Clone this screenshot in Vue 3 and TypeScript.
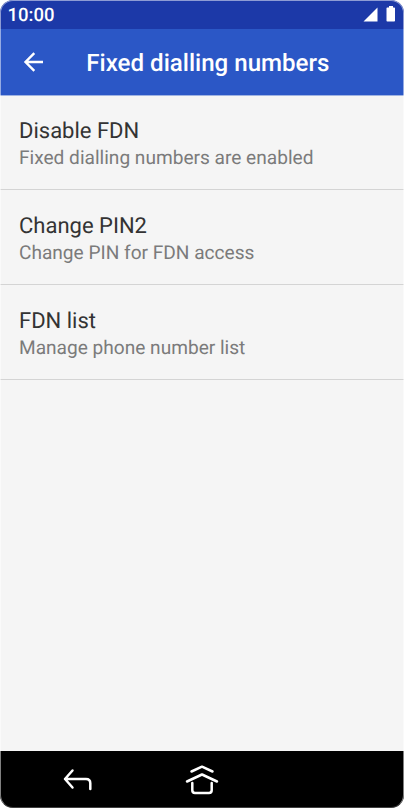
<script setup lang="ts">
interface Setting {
  title: string
  summary: string
}

const settings: Setting[] = [
  { title: 'Disable FDN', summary: 'Fixed dialling numbers are enabled' },
  { title: 'Change PIN2', summary: 'Change PIN for FDN access' },
  { title: 'FDN list', summary: 'Manage phone number list' },
]
</script>

<template>
  <div class="phone">
    <header class="status">
      <span class="time">10:00</span>
      <svg class="indicators" width="34" height="18" viewBox="0 0 34 18" fill="#fff">
        <path d="M14.500 2.500V16.500H.5z" />
        <path d="M26 1h4v1.500h1.200q.8 0 .8.8V15.700q0 .8-.8.8h-6.900q-.8 0-.8-.8V3.300q0-.8.8-.8H26z" />
      </svg>
    </header>
    <div class="toolbar">
      <svg class="back" width="20" height="20" viewBox="0 0 20 20" fill="none" stroke="#fff" stroke-width="2.400">
        <path d="M20 10H2.500M11.300 1.200 2.500 10l8.800 8.800" />
      </svg>
      <h1>Fixed dialling numbers</h1>
    </div>
    <main class="list">
      <div v-for="item in settings" :key="item.title" class="row">
        <div class="title">{{ item.title }}</div>
        <div class="summary">{{ item.summary }}</div>
      </div>
    </main>
    <nav class="nav">
      <svg width="30" height="24" viewBox="0 0 30 24" class="nav-back">
        <path d="M10.500 2.500 3 11l7.500 8.500M3 11h21q4.300 0 4.300 4.300V21" />
      </svg>
      <svg width="34" height="32" viewBox="0 0 34 32" class="nav-home">
        <path d="M6.500 7.500 17 2.700l10.500 4.800M2 17.500l15-7 15 7M7.300 19v7.300q0 2.700 2.700 2.700h14q2.700 0 2.700-2.700V19" />
      </svg>
    </nav>
  </div>
</template>

<style>
body {
  margin: 0;
  background: #fff;
}
</style>

<style scoped>
.phone {
  position: relative;
  display: flex;
  flex-direction: column;
  width: 404px;
  height: 808px;
  overflow: hidden;
  border-radius: 13px;
  background: #f5f5f5;
  font-family: Roboto, sans-serif;
  text-rendering: geometricPrecision;
}
.phone::after {
  content: '';
  position: absolute;
  inset: 0;
  border: 1px solid rgba(255, 255, 255, 0.5);
  border-bottom-color: rgba(255, 255, 255, 0.25);
  border-radius: 13px;
}
.status {
  display: flex;
  justify-content: space-between;
  height: 29px;
  box-sizing: border-box;
  padding: 5px 7px 0 7.5px;
  background: #1c39a8;
  color: #fff;
}
.time {
  font-size: 18.5px;
  line-height: 21px;
  font-weight: 500;
}
.indicators {
  flex: none;
}
.toolbar {
  display: flex;
  align-items: center;
  height: 66px;
  padding-left: 22.5px;
  background: #2b57c6;
  border-bottom: 1px solid #9fb3e2;
}
.back {
  margin-right: 43.8px;
}
h1 {
  margin: 0;
  padding-top: 2px;
  color: #fff;
  font-size: 24.1px;
  line-height: 30px;
  font-weight: 500;
  white-space: nowrap;
}
.list {
  flex: 1;
}
.row {
  height: 95px;
  box-sizing: border-box;
  padding: 22px 19px 0;
  border-bottom: 1px solid #d4d4d4;
}
.row:first-child {
  height: 94px;
  padding-top: 21px;
}
.title {
  color: #333;
  font-size: 22px;
  line-height: 29px;
}
.summary {
  color: #7b7b7b;
  font-size: 19.1px;
  line-height: 24px;
}
.nav {
  display: flex;
  align-items: center;
  height: 57px;
  padding-left: 62px;
  background: #000;
}
.nav path {
  fill: none;
  stroke: #fff;
  stroke-width: 2.5;
  stroke-linecap: round;
  stroke-linejoin: round;
}
.nav-home {
  margin-left: 93px;
}
</style>
